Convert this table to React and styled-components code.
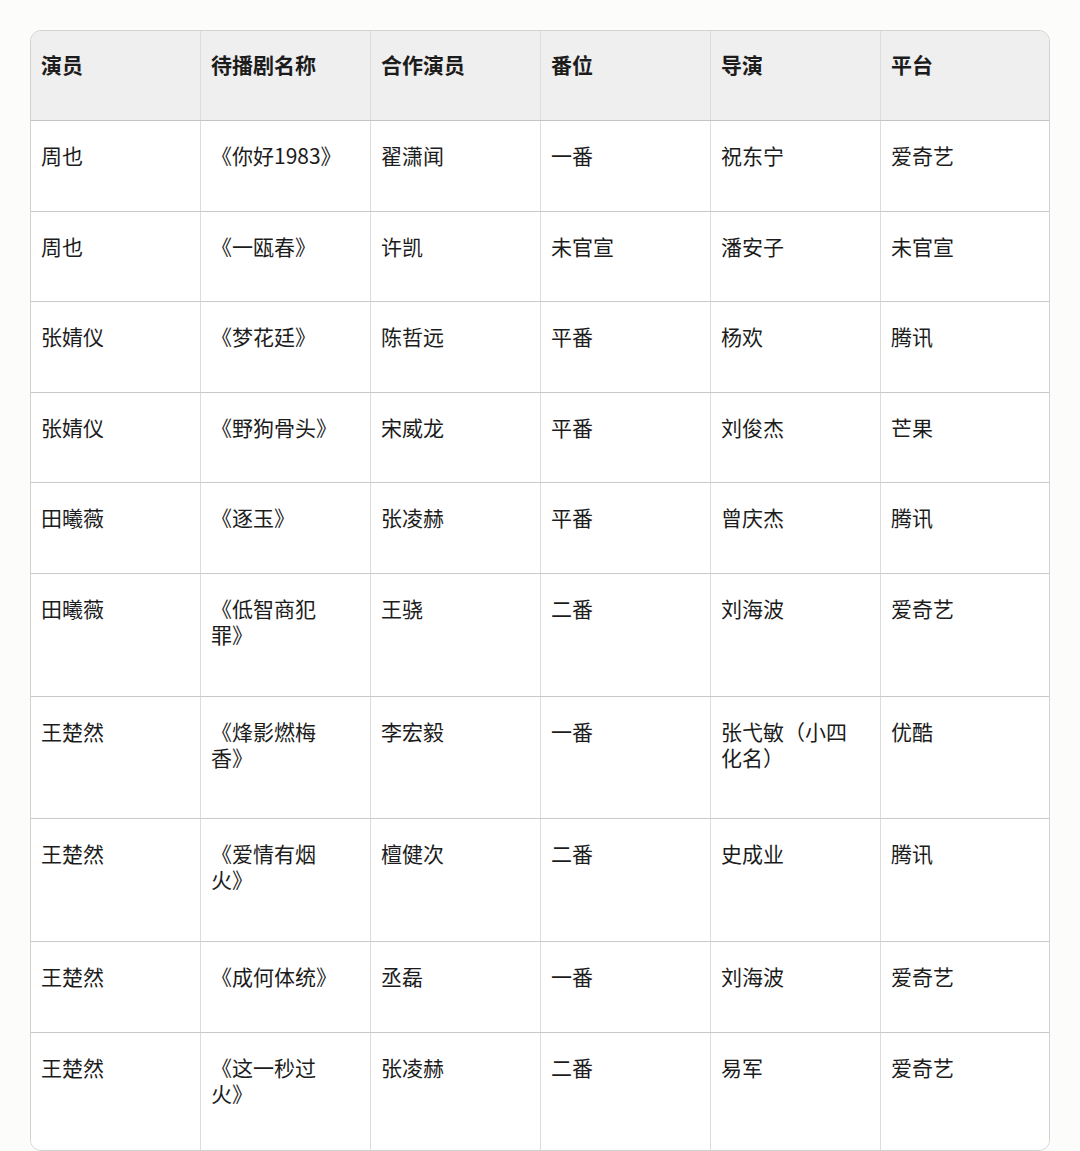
import React from "react";
import styled, { createGlobalStyle } from "styled-components";

const Global = createGlobalStyle`
  html, body { margin: 0; padding: 0; background: #fcfcfa; }
  body { font-family: "Noto Sans CJK SC", "Noto Sans", sans-serif; color: #1c1c1c; }
`;

const Page = styled.div`
  padding: 30px 30px 0 30px;
  height: 1151px;
  box-sizing: border-box;
  overflow: hidden;
`;

const Table = styled.div`
  width: 1020px;
  box-sizing: border-box;
  border: 1px solid #d2d2d2;
  border-radius: 11px;
  overflow: hidden;
  background: #ffffff;
`;

const Row = styled.div`
  display: grid;
  grid-template-columns: 169px 170px 170px 170px 170px 1fr;
  height: ${(p) => p.$h}px;
  box-sizing: border-box;
  border-top: ${(p) => (p.$first ? "none" : "1px solid #c9c9c9")};
  background: ${(p) => (p.$head ? "#efefef" : "#ffffff")};
  border-bottom: ${(p) => (p.$head ? "1px solid #c4c4c4" : "none")};
`;

const Cell = styled.div`
  box-sizing: border-box;
  padding: ${(p) => (p.$head ? "20px" : "21px")} 26px 0 10px;
  font-size: 21px;
  line-height: 26px;
  font-weight: ${(p) => (p.$head ? 700 : 400)};
  border-left: 1px solid #dcdcdc;
  &:first-child { border-left: none; }
  word-break: break-all;
`;

const head = ["演员", "待播剧名称", "合作演员", "番位", "导演", "平台"];

const rows = [
  { h: 90, c: ["周也", "《你好1983》", "翟潇闻", "一番", "祝东宁", "爱奇艺"] },
  { h: 90, c: ["周也", "《一瓯春》", "许凯", "未官宣", "潘安子", "未官宣"] },
  { h: 91, c: ["张婧仪", "《梦花廷》", "陈哲远", "平番", "杨欢", "腾讯"] },
  { h: 90, c: ["张婧仪", "《野狗骨头》", "宋威龙", "平番", "刘俊杰", "芒果"] },
  { h: 91, c: ["田曦薇", "《逐玉》", "张凌赫", "平番", "曾庆杰", "腾讯"] },
  { h: 123, c: ["田曦薇", "《低智商犯罪》", "王骁", "二番", "刘海波", "爱奇艺"] },
  { h: 122, c: ["王楚然", "《烽影燃梅香》", "李宏毅", "一番", "张弋敏（小四化名）", "优酷"] },
  { h: 123, c: ["王楚然", "《爱情有烟火》", "檀健次", "二番", "史成业", "腾讯"] },
  { h: 91, c: ["王楚然", "《成何体统》", "丞磊", "一番", "刘海波", "爱奇艺"] },
  { h: 118, c: ["王楚然", "《这一秒过火》", "张凌赫", "二番", "易军", "爱奇艺"] },
];

export default function App() {
  return (
    <>
      <Global />
      <Page>
        <Table>
          <Row $head $first $h={90}>
            {head.map((t) => (
              <Cell key={t} $head>{t}</Cell>
            ))}
          </Row>
          {rows.map((r, i) => (
            <Row key={i} $h={r.h} $first={i === 0}>
              {r.c.map((t, j) => (
                <Cell key={j}>{t}</Cell>
              ))}
            </Row>
          ))}
        </Table>
      </Page>
    </>
  );
}
